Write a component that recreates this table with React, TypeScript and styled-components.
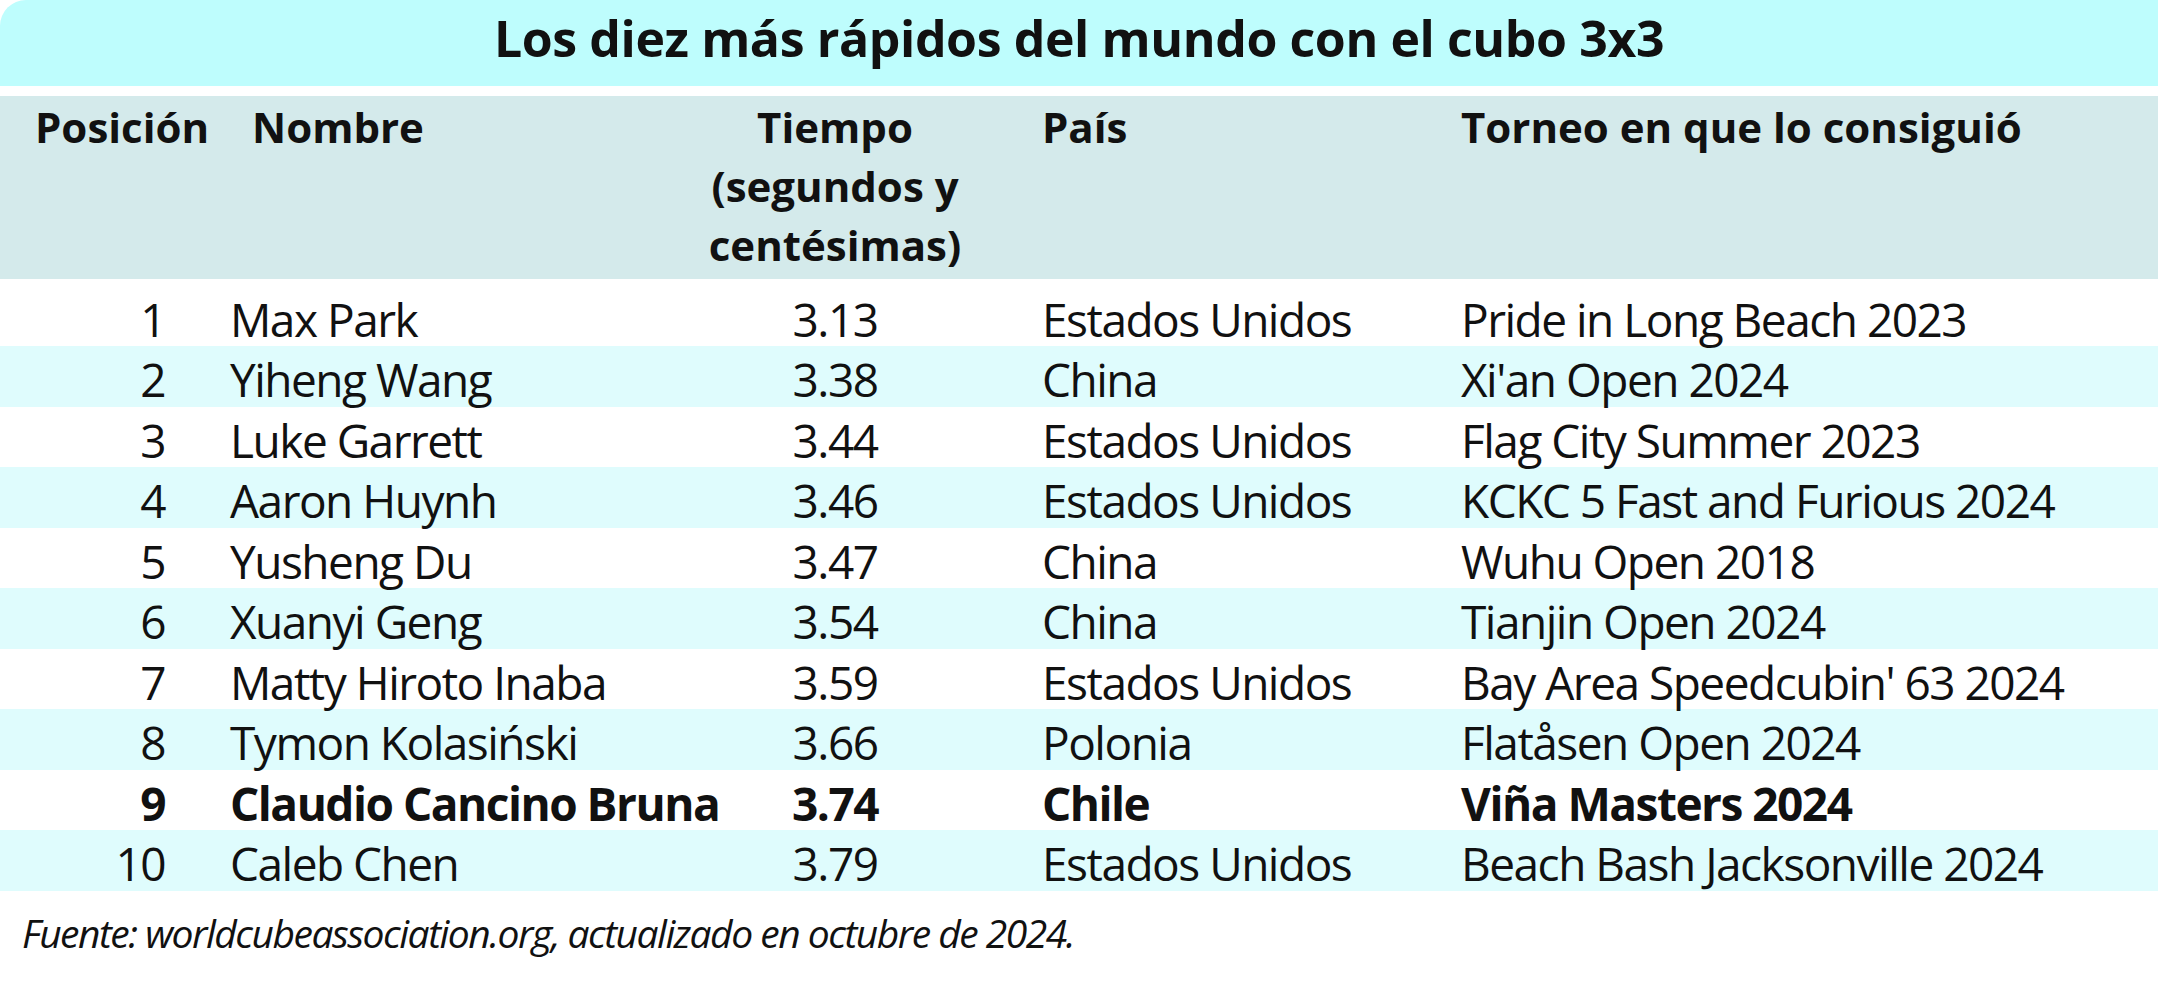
import * as React from 'react';
import styled, { createGlobalStyle } from 'styled-components';

const GlobalStyle = createGlobalStyle`
  html, body {
    margin: 0;
    padding: 0;
    background: #ffffff;
  }
  body {
    font-family: "Open Sans", "Noto Sans", "DejaVu Sans", sans-serif;
    color: #111111;
  }
`;

type Record = {
  pos: number;
  name: string;
  time: string;
  country: string;
  event: string;
  highlight?: boolean;
};

const records: Record[] = [
  { pos: 1, name: 'Max Park', time: '3.13', country: 'Estados Unidos', event: 'Pride in Long Beach 2023' },
  { pos: 2, name: 'Yiheng Wang', time: '3.38', country: 'China', event: "Xi'an Open 2024" },
  { pos: 3, name: 'Luke Garrett', time: '3.44', country: 'Estados Unidos', event: 'Flag City Summer 2023' },
  { pos: 4, name: 'Aaron Huynh', time: '3.46', country: 'Estados Unidos', event: 'KCKC 5 Fast and Furious 2024' },
  { pos: 5, name: 'Yusheng Du', time: '3.47', country: 'China', event: 'Wuhu Open 2018' },
  { pos: 6, name: 'Xuanyi Geng', time: '3.54', country: 'China', event: 'Tianjin Open 2024' },
  { pos: 7, name: 'Matty Hiroto Inaba', time: '3.59', country: 'Estados Unidos', event: "Bay Area Speedcubin' 63 2024" },
  { pos: 8, name: 'Tymon Kolasiński', time: '3.66', country: 'Polonia', event: 'Flatåsen Open 2024' },
  { pos: 9, name: 'Claudio Cancino Bruna', time: '3.74', country: 'Chile', event: 'Viña Masters 2024', highlight: true },
  { pos: 10, name: 'Caleb Chen', time: '3.79', country: 'Estados Unidos', event: 'Beach Bash Jacksonville 2024' },
];

const COLUMNS = '215px 485px 270px 491px 1fr';

const Page = styled.div`
  width: 2158px;
  padding-bottom: 40px;
`;

const TitleBar = styled.h1`
  margin: 0;
  height: 86px;
  background: #befdfd;
  border-top-left-radius: 26px;
  display: flex;
  align-items: center;
  justify-content: center;
  font-size: 50px;
  font-weight: 700;
  letter-spacing: -0.4px;
  padding-bottom: 10px;
  box-sizing: border-box;
`;

const Table = styled.div`
  margin-top: 10px;
`;

const HeaderRow = styled.div`
  display: grid;
  grid-template-columns: ${COLUMNS};
  height: 183px;
  box-sizing: border-box;
  padding-top: 1px;
  background: #d4eaeb;
  font-size: 42px;
  font-weight: 700;
  line-height: 59px;
`;

const HeaderCell = styled.div<{ $align?: 'left' | 'center' | 'right'; $pad?: number }>`
  text-align: ${(p) => p.$align || 'left'};
  padding-left: ${(p) => p.$pad || 0}px;
  white-space: nowrap;
`;

const Row = styled.div<{ $shaded: boolean; $first: boolean; $bold?: boolean }>`
  display: grid;
  grid-template-columns: ${COLUMNS};
  height: ${(p) => (p.$first ? 67 : 60.5)}px;
  box-sizing: border-box;
  padding-top: ${(p) => (p.$first ? 15 : 8)}px;
  background: ${(p) => (p.$shaded ? '#dffcfd' : '#ffffff')};
  font-size: 46px;
  font-weight: ${(p) => (p.$bold ? 700 : 400)};
  letter-spacing: -1.5px;
  line-height: 50px;
`;

const Cell = styled.div<{ $align?: 'left' | 'center' | 'right'; $padLeft?: number; $padRight?: number }>`
  text-align: ${(p) => p.$align || 'left'};
  padding-left: ${(p) => p.$padLeft || 0}px;
  padding-right: ${(p) => p.$padRight || 0}px;
  white-space: nowrap;
`;

const Source = styled.p`
  margin: 17px 0 0;
  padding-left: 22px;
  font-size: 39px;
  font-style: italic;
  letter-spacing: -1.5px;
  line-height: 50px;
`;

const App: React.FC = () => {
  return (
    <Page>
      <GlobalStyle />
      <TitleBar>Los diez más rápidos del mundo con el cubo 3x3</TitleBar>
      <Table>
        <HeaderRow>
          <HeaderCell $pad={35}>Posición</HeaderCell>
          <HeaderCell $pad={37}>Nombre</HeaderCell>
          <HeaderCell $align="center">
            Tiempo
            <br />
            (segundos y
            <br />
            centésimas)
          </HeaderCell>
          <HeaderCell $pad={72}>País</HeaderCell>
          <HeaderCell>Torneo en que lo consiguió</HeaderCell>
        </HeaderRow>
        {records.map((r, i) => (
          <Row key={r.pos} $shaded={i % 2 === 1} $first={i === 0} $bold={r.highlight}>
            <Cell $align="right" $padRight={50}>{r.pos}</Cell>
            <Cell $padLeft={15}>{r.name}</Cell>
            <Cell $align="center">{r.time}</Cell>
            <Cell $padLeft={72}>{r.country}</Cell>
            <Cell>{r.event}</Cell>
          </Row>
        ))}
      </Table>
      <Source>Fuente: worldcubeassociation.org, actualizado en octubre de 2024.</Source>
    </Page>
  );
};

export default App;
